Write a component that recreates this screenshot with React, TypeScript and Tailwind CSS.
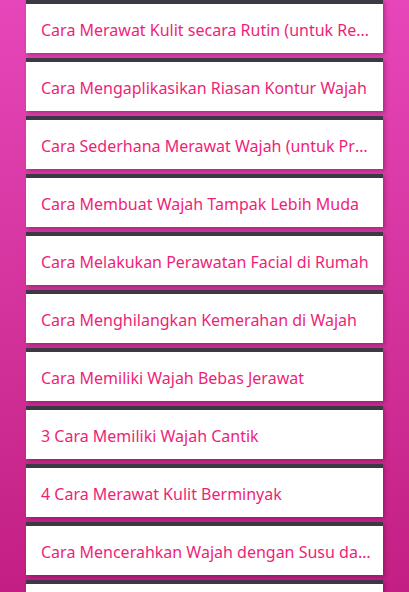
import React from 'react';

const items = [
  'Cara Merawat Kulit secara Rutin (untuk Remaja)',
  'Cara Mengaplikasikan Riasan Kontur Wajah',
  'Cara Sederhana Merawat Wajah (untuk Pria)',
  'Cara Membuat Wajah Tampak Lebih Muda',
  'Cara Melakukan Perawatan Facial di Rumah',
  'Cara Menghilangkan Kemerahan di Wajah',
  'Cara Memiliki Wajah Bebas Jerawat',
  '3 Cara Memiliki Wajah Cantik',
  '4 Cara Merawat Kulit Berminyak',
  'Cara Mencerahkan Wajah dengan Susu dan Madu',
  'Cara Menghilangkan Flek Hitam di Wajah',
];

const App: React.FC = () => {
  return (
    <div className="h-[592px] w-full overflow-hidden bg-gradient-to-b from-[#e646b9] to-[#c31e83]">
      <div className="ml-[26px] w-[357px] flex flex-col gap-[5px]">
        {items.map((title) => (
          <div key={title} className="flex flex-col shadow-[2px_2px_4px_rgba(80,0,50,0.35)]">
            <div className="h-[4px] bg-[#3d3944]" />
            <div className="h-[49px] bg-white flex items-center pl-[15px] pr-[12px] pt-[2px]">
              <span
                className="truncate text-[16px] text-[#ee1f78]"
                style={{ fontFamily: '"Noto Sans", "DejaVu Sans", sans-serif' }}
              >
                {title}
              </span>
            </div>
          </div>
        ))}
      </div>
    </div>
  );
};

export default App;
